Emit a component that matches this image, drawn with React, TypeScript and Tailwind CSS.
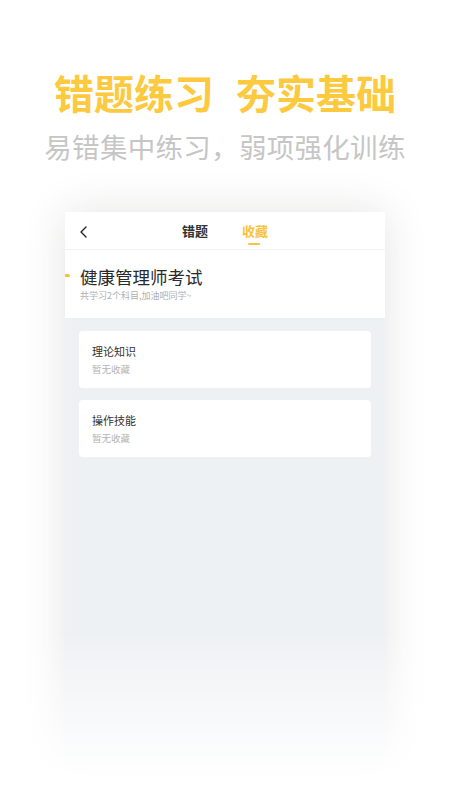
import React from "react";

const cjk = { fontFamily: '"Noto Sans CJK SC", "Noto Sans", sans-serif' };

function Item({ title }: { title: string }) {
  return (
    <div className="bg-white rounded-[4px] h-[57px] pl-[13px] flex flex-col justify-center">
      <div className="text-[11px] leading-[14px] text-[#333333]">{title}</div>
      <div className="text-[9.5px] leading-[12px] text-[#b4b4b4] mt-[5px]">暂无收藏</div>
    </div>
  );
}

export default function App() {
  return (
    <div className="relative w-[450px] h-[800px] bg-white overflow-hidden" style={cjk}>
      <div className="flex flex-col items-center pt-[72px]">
        <div className="flex gap-[22px] text-[40px] leading-[40px] font-bold text-[#fdc93f]">
          <span>错题练习</span>
          <span>夯实基础</span>
        </div>
        <div className="mt-[20px] text-[27.5px] leading-[28px] text-[#c6c6c6] tracking-[0.3px]">
          易错集中练习，弱项强化训练
        </div>
      </div>

      <div className="ml-[65px] mt-[52px] w-[320px] h-[560px] bg-[#eef1f4] shadow-[0_0_40px_rgba(60,50,40,0.13)] flex flex-col">
        <div className="relative h-[38px] bg-white border-b border-[#f1f1f1] flex items-center justify-center gap-[34px]">
          <svg className="absolute left-[14px] top-[14px]" width="9" height="12" viewBox="0 0 9 12" fill="none">
            <path d="M7 1L2 6l5 5" stroke="#222" strokeWidth="1.4" strokeLinecap="round" strokeLinejoin="round" />
          </svg>
          <div className="text-[13px] leading-[16px] font-bold text-[#333]">错题</div>
          <div className="relative text-[13px] leading-[16px] font-bold text-[#f8c23a]">
            收藏
            <span className="absolute left-[6px] top-[20px] w-[12px] h-[2px] rounded-full bg-[#f8c23a]" />
          </div>
        </div>
        <div className="relative bg-white h-[68px] pl-[15px] pt-[16px]">
          <span className="absolute left-0 top-[24px] w-[5px] h-[3px] bg-[#f8c23a] rounded-r-sm" />
          <div className="text-[17.5px] leading-[22px] text-[#2a2a2a]">健康管理师考试</div>
          <div className="text-[9px] leading-[12px] text-[#b0b0b0] mt-[2px]">共学习2个科目,加油吧同学~</div>
        </div>
        <div className="flex flex-col gap-[12px] px-[14px] pt-[13px]">
          <Item title="理论知识" />
          <Item title="操作技能" />
        </div>
      </div>

      <div className="absolute left-0 right-0 top-[630px] h-[150px] bg-gradient-to-b from-[rgba(255,255,255,0)] to-white" />
      <div className="absolute left-0 right-0 top-[780px] h-[20px] bg-white" />
    </div>
  );
}
